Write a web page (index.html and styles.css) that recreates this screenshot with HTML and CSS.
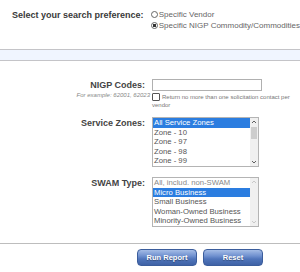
FILE: index.html
```html
<!DOCTYPE html>
<html lang="en">
  <head>
    <meta charset="UTF-8" />
    <meta name="viewport" content="width=device-width, initial-scale=1.0" />
    <title>Solicitation Report</title>
    <link rel="stylesheet" href="styles.css">
  </head>
  <body>
    <div class="pref">
      <div class="pref-label">Select your search preference:</div>
      <div class="pref-options">
        <div class="opt"><span class="radio"></span>Specific Vendor</div>
        <div class="opt"><span class="radio checked"></span>Specific NIGP Commodity/Commodities</div>
      </div>
    </div>

    <div class="band"></div>

    <div class="form">
      <div class="row">
        <div class="label-cell">
          <div class="label">NIGP Codes:</div>
          <div class="note">For example: 62001, 62023</div>
        </div>
        <div class="field-cell">
          <div class="text-input"></div>
          <div class="check-line"><span class="checkbox"></span>Return no more than one solicitation contact per vendor</div>
        </div>
      </div>

      <div class="row zones">
        <div class="label-cell"><div class="label">Service Zones:</div></div>
        <div class="field-cell">
          <div class="listbox">
            <div class="items">
              <div class="item selected">All Service Zones</div>
              <div class="item">Zone - 10</div>
              <div class="item">Zone - 97</div>
              <div class="item">Zone - 98</div>
              <div class="item">Zone - 99</div>
            </div>
            <div class="scrollbar">
              <div class="arrow"><svg width="6" height="4" viewBox="0 0 6 4"><polyline points="1,3 3,1 5,3" /></svg></div>
              <div class="thumb"></div>
              <div class="track"></div>
              <div class="arrow"><svg width="6" height="4" viewBox="0 0 6 4"><polyline points="1,1 3,3 5,1" /></svg></div>
            </div>
          </div>
        </div>
      </div>

      <div class="row swam">
        <div class="label-cell"><div class="label">SWAM Type:</div></div>
        <div class="field-cell">
          <div class="listbox">
            <div class="items">
              <div class="item muted">All, includ. non-SWAM</div>
              <div class="item selected">Micro Business</div>
              <div class="item">Small Business</div>
              <div class="item">Woman-Owned Business</div>
              <div class="item">Minority-Owned Business</div>
            </div>
            <div class="scrollbar faint">
              <div class="arrow"><svg width="6" height="4" viewBox="0 0 6 4"><polyline points="1,3 3,1 5,3" /></svg></div>
              <div class="track"></div>
              <div class="arrow"><svg width="6" height="4" viewBox="0 0 6 4"><polyline points="1,1 3,3 5,1" /></svg></div>
            </div>
          </div>
        </div>
      </div>
    </div>

    <div class="divider"></div>

    <div class="buttons">
      <button class="btn">Run Report</button>
      <button class="btn">Reset</button>
    </div>
  </body>
</html>
```

FILE: styles.css
```css
body {
  margin: 0;
  width: 300px;
  height: 272px;
  overflow: hidden;
  background: #fff;
  font-family: "Liberation Sans", Arial, sans-serif;
  color: #444;
}

.pref {
  display: flex;
  height: 49px;
  box-sizing: border-box;
  padding: 9px 0 0 12px;
  white-space: nowrap;
}

.pref-label {
  width: 143px;
  font-size: 9px;
  font-weight: bold;
  line-height: 12px;
  color: #3a3a3a;
}

.pref-options {
  font-size: 8px;
  line-height: 11px;
  color: #666;
}

.opt {
  display: flex;
  align-items: center;
}

.radio {
  width: 5px;
  height: 5px;
  border: 1px solid #666;
  border-radius: 50%;
  margin-right: 1px;
  background: #fff;
  position: relative;
}

.radio.checked {
  background: radial-gradient(circle, #333 0 1.6px, #fff 2px);
}

.band {
  height: 10px;
  background: #f0f5ff;
  border-top: 1px solid #c4c4c8;
  border-bottom: 1px solid #c4c4c8;
}

.form {
  padding-top: 18px;
}

.row {
  display: grid;
  grid-template-columns: 150px 110px;
  column-gap: 2px;
}

.row.zones {
  margin-top: 8px;
}

.row.swam {
  margin-top: 10px;
}

.label-cell {
  text-align: right;
}

.label {
  font-size: 9px;
  font-weight: bold;
  line-height: 12px;
  padding-right: 5px;
  color: #444;
}

.note {
  font-size: 6px;
  font-style: italic;
  line-height: 8px;
  color: #888;
  white-space: nowrap;
}

.text-input {
  height: 12px;
  box-sizing: border-box;
  border: 1px solid #b0b0b0;
  background: #fff;
}

.check-line {
  margin-top: 2px;
  width: 140px;
  font-size: 6px;
  line-height: 8px;
  color: #777;
}

.checkbox {
  display: inline-block;
  width: 6px;
  height: 6px;
  border: 1px solid #555;
  border-radius: 1px;
  margin-right: 2px;
  vertical-align: -2px;
}

.listbox {
  display: flex;
  width: 107px;
  height: 50px;
  box-sizing: border-box;
  border: 1px solid #b4b4b4;
  background: #fff;
  overflow: hidden;
}

.items {
  flex: 1;
  font-size: 7.7px;
  white-space: nowrap;
  overflow: hidden;
}

.item {
  height: 9.6px;
  line-height: 9.6px;
  padding-left: 1px;
  color: #555;
}

.item.selected {
  background: #2b7de0;
  color: #fff;
}

.item.muted {
  color: #888;
}

.scrollbar {
  width: 8px;
  display: flex;
  flex-direction: column;
  background: #f0f0f0;
}

.arrow {
  height: 8px;
  display: flex;
  align-items: center;
  justify-content: center;
}

.arrow polyline {
  fill: none;
  stroke: #606060;
  stroke-width: 1;
}

.scrollbar.faint .arrow polyline {
  stroke: #c8c8c8;
}

.thumb {
  height: 12px;
  margin: 1px 1px 0;
  background: #cdcdcd;
}

.track {
  flex: 1;
}

.divider {
  margin-top: 16px;
  border-top: 1px solid #bdbdbd;
}

.buttons {
  display: flex;
  gap: 6px;
  padding: 5px 0 0 137px;
}

.btn {
  width: 60px;
  height: 17px;
  padding: 0;
  border: 1px solid #3b5d9c;
  border-radius: 4px;
  background: linear-gradient(#a4bce6 0%, #6f90cf 40%, #5075bb 60%, #3f62a6 100%);
  color: #fff;
  font-family: "Liberation Sans", Arial, sans-serif;
  font-size: 7.5px;
  font-weight: bold;
  text-shadow: 0 1px 1px rgba(0, 0, 0, 0.35);
  cursor: pointer;
}
```
